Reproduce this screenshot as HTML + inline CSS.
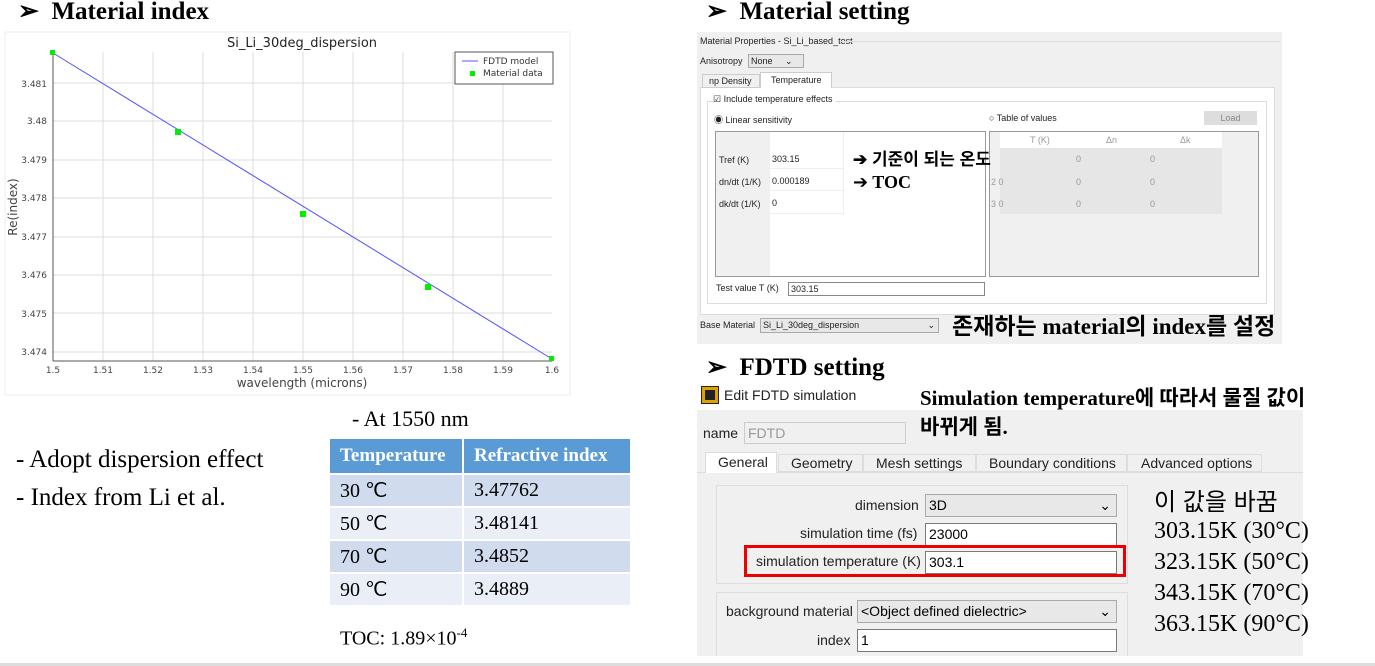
<!DOCTYPE html>
<html><head><meta charset="utf-8"><style>
*{margin:0;padding:0;box-sizing:border-box}
body{width:1375px;height:666px;position:relative;background:#fff;overflow:hidden;font-family:"Liberation Sans","Noto Sans CJK KR",sans-serif}
.a{position:absolute;white-space:nowrap}
.h{font-family:"Liberation Serif","Noto Serif CJK SC",serif;font-weight:bold;font-size:25px}
.s{font-family:"Liberation Serif","Noto Sans CJK KR",serif;font-size:25px}
.u{font-size:9px;color:#222}
.f{position:absolute;background:#fff;border:1px solid #aaa}
.t td{height:33px;padding-left:10px;font-family:"Liberation Serif",serif;font-size:20px;border:2px solid #fff}
.w{font-size:14px;color:#222}
.fi{position:absolute;background:#fff;border:1px solid #7a7a7a;font-size:14px;padding-left:3px;line-height:20px}
</style></head><body>
<div class="a h" style="left:18px;top:-4px">➢&nbsp; Material index</div>
<div class="a h" style="left:706px;top:-4px">➢&nbsp; Material setting</div>
<div class="a h" style="left:706px;top:352px">➢&nbsp; FDTD setting</div>

<svg class="a" style="left:0;top:0" width="580" height="400" font-family="DejaVu Sans,sans-serif">
<rect x="5" y="32" width="565" height="363" fill="#fff" stroke="#eee"/>
<g stroke="#ddd" stroke-width="1">
<line x1="103" y1="52" x2="103" y2="361"/><line x1="153" y1="52" x2="153" y2="361"/><line x1="203" y1="52" x2="203" y2="361"/><line x1="253" y1="52" x2="253" y2="361"/><line x1="303" y1="52" x2="303" y2="361"/><line x1="353" y1="52" x2="353" y2="361"/><line x1="403" y1="52" x2="403" y2="361"/><line x1="453" y1="52" x2="453" y2="361"/><line x1="503" y1="52" x2="503" y2="361"/>
<line x1="53" y1="83" x2="552" y2="83"/><line x1="53" y1="121" x2="552" y2="121"/><line x1="53" y1="160" x2="552" y2="160"/><line x1="53" y1="198" x2="552" y2="198"/><line x1="53" y1="237" x2="552" y2="237"/><line x1="53" y1="275" x2="552" y2="275"/><line x1="53" y1="313" x2="552" y2="313"/><line x1="53" y1="352" x2="552" y2="352"/>
</g>
<line x1="53" y1="52" x2="53" y2="361" stroke="#555"/><line x1="53" y1="361" x2="552" y2="361" stroke="#555"/>
<line x1="53" y1="53" x2="552" y2="359" stroke="#55f"/>
<g fill="#0e0"><rect x="50" y="50" width="5" height="5"/><rect x="175" y="129" width="6" height="6"/><rect x="300" y="211" width="6" height="6"/><rect x="425" y="284" width="6" height="6"/><rect x="549" y="356" width="5" height="5"/></g>
<text x="302" y="47" font-size="13" text-anchor="middle" fill="#222">Si_Li_30deg_dispersion</text>
<rect x="455" y="52" width="98" height="32" fill="#fff" stroke="#555"/>
<line x1="462" y1="61" x2="478" y2="61" stroke="#55f"/><text x="483" y="64" font-size="9" fill="#333">FDTD model</text>
<rect x="470" y="71" width="5" height="5" fill="#0e0"/><text x="483" y="76" font-size="9" fill="#333">Material data</text>
<g font-size="9" fill="#444" text-anchor="end"><text x="47" y="87">3.481</text><text x="47" y="124">3.48</text><text x="47" y="163">3.479</text><text x="47" y="201">3.478</text><text x="47" y="240">3.477</text><text x="47" y="278">3.476</text><text x="47" y="317">3.475</text><text x="47" y="355">3.474</text></g>
<g font-size="9" fill="#444" text-anchor="middle"><text x="53" y="373">1.5</text><text x="103" y="373">1.51</text><text x="153" y="373">1.52</text><text x="203" y="373">1.53</text><text x="253" y="373">1.54</text><text x="303" y="373">1.55</text><text x="353" y="373">1.56</text><text x="403" y="373">1.57</text><text x="453" y="373">1.58</text><text x="503" y="373">1.59</text><text x="552" y="373">1.6</text></g>
<text x="302" y="387" font-size="12" text-anchor="middle" fill="#444">wavelength (microns)</text>
<text transform="translate(17,207) rotate(-90)" font-size="12" text-anchor="middle" fill="#444">Re(index)</text>
</svg>

<div class="a s" style="left:352px;top:406px;font-size:22px">- At 1550 nm</div>
<div class="a s" style="left:16px;top:446px">- Adopt dispersion effect</div>
<div class="a s" style="left:16px;top:484px">- Index from Li et al.</div>
<table class="a t" style="left:328px;top:437px;width:304px;border-collapse:collapse">
<tr style="background:#5b9bd5;color:#fff"><td style="width:134px;font-weight:bold;height:36px;font-size:19px">Temperature</td><td style="font-weight:bold;font-size:19px">Refractive index</td></tr>
<tr style="background:#d0dbee"><td>30 ℃</td><td>3.47762</td></tr>
<tr style="background:#e9eef7"><td>50 ℃</td><td>3.48141</td></tr>
<tr style="background:#d0dbee"><td>70 ℃</td><td>3.4852</td></tr>
<tr style="background:#e9eef7"><td>90 ℃</td><td>3.4889</td></tr>
</table>
<div class="a" style="left:340px;top:625px;font-family:'Liberation Serif',serif;font-size:20px">TOC: 1.89×10<sup style="font-size:13px">-4</sup></div>

<!-- Material setting -->
<div class="a" style="left:697px;top:32px;width:585px;height:312px;background:#f0f0f0"></div>
<div class="a u" style="left:700px;top:36px">Material Properties - Si_Li_based_test</div>
<div class="a" style="left:840px;top:41px;width:440px;height:1px;background:#ddd"></div>
<div class="a u" style="left:700px;top:56px">Anisotropy</div>
<div class="f u" style="left:748px;top:54px;width:56px;height:14px;background:#e8e8e8;padding-left:2px;line-height:12px">None &nbsp; &nbsp; ⌄</div>
<div class="a" style="left:700px;top:87px;width:575px;height:228px;background:#fff;border:1px solid #ddd"></div>
<div class="a u" style="left:702px;top:74px;width:58px;height:14px;border:1px solid #ccc;background:#f0f0f0;padding-left:6px;line-height:12px">np Density</div>
<div class="a u" style="left:760px;top:72px;width:72px;height:16px;border:1px solid #ccc;border-bottom:none;background:#fff;padding-left:10px;line-height:14px">Temperature</div>
<div class="a" style="left:707px;top:101px;width:560px;height:203px;border:1px solid #ddd"></div>
<div class="a u" style="left:713px;top:94px;background:#fff;padding-right:3px">☑ Include temperature effects</div>
<div class="a u" style="left:714px;top:113px">◉ Linear sensitivity</div>
<div class="a u" style="left:989px;top:113px">○ Table of values</div>
<div class="a u" style="left:1204px;top:111px;width:53px;height:14px;background:#ddd;color:#888;text-align:center;line-height:14px">Load</div>
<div class="a" style="left:715px;top:131px;width:271px;height:146px;border:1px solid #999;background:#fff"></div>
<div class="a" style="left:716px;top:132px;width:54px;height:144px;background:#f0f0f0"></div>
<div class="a u" style="left:719px;top:155px">Tref (K)</div><div class="a u" style="left:772px;top:154px">303.15</div>
<div class="a u" style="left:719px;top:177px">dn/dt (1/K)</div><div class="a u" style="left:772px;top:176px">0.000189</div>
<div class="a u" style="left:719px;top:199px">dk/dt (1/K)</div><div class="a u" style="left:772px;top:198px">0</div>
<div class="a" style="left:770px;top:168px;width:74px;height:1px;background:#eee"></div>
<div class="a" style="left:770px;top:190px;width:74px;height:1px;background:#eee"></div>
<div class="a" style="left:770px;top:213px;width:74px;height:1px;background:#eee"></div>
<div class="a" style="left:843px;top:132px;width:1px;height:82px;background:#eee"></div>
<div class="a" style="left:989px;top:131px;width:270px;height:146px;border:1px solid #999;background:#f0f0f0"></div>
<div class="a" style="left:1000px;top:132px;width:222px;height:16px;background:#fff"></div>
<div class="a" style="left:1000px;top:148px;width:222px;height:66px;background:#e6e6e6"></div>
<div class="a u" style="left:1030px;top:135px;color:#999">T (K)</div><div class="a u" style="left:1106px;top:135px;color:#999">Δn</div><div class="a u" style="left:1180px;top:135px;color:#999">Δk</div>
<div class="a u" style="left:1076px;top:154px;color:#999">0</div><div class="a u" style="left:1150px;top:154px;color:#999">0</div>
<div class="a u" style="left:991px;top:177px;color:#999">2 0</div><div class="a u" style="left:1076px;top:177px;color:#999">0</div><div class="a u" style="left:1150px;top:177px;color:#999">0</div>
<div class="a u" style="left:991px;top:199px;color:#999">3 0</div><div class="a u" style="left:1076px;top:199px;color:#999">0</div><div class="a u" style="left:1150px;top:199px;color:#999">0</div>
<div class="a" style="left:853px;top:145px;font-size:17px;font-weight:bold">➔ 기준이 되는 온도</div>
<div class="a" style="left:853px;top:172px;font-size:18px;font-weight:bold;font-family:'Liberation Serif','DejaVu Sans',serif">➔ TOC</div>
<div class="a u" style="left:716px;top:283px">Test value T (K)</div>
<div class="f u" style="left:788px;top:282px;width:197px;height:14px;line-height:12px;padding-left:2px;border-color:#888">303.15</div>
<div class="a u" style="left:700px;top:320px">Base Material</div>
<div class="f u" style="left:760px;top:318px;width:179px;height:15px;background:#e8e8e8;line-height:13px;padding-left:2px">Si_Li_30deg_dispersion<span style="float:right;padding-right:3px">⌄</span></div>
<div class="a" style="left:952px;top:307px;font-size:23px;font-weight:bold;font-family:'Liberation Serif','Noto Sans CJK KR',serif">존재하는 material의 index를 설정</div>

<!-- FDTD -->
<div class="a" style="left:697px;top:410px;width:606px;height:246px;background:#f0f0f0"></div>
<div class="a" style="left:702px;top:387px;width:16px;height:16px;background:#222;border:3px solid #e0a000;outline:1px solid #222"></div>
<div class="a w" style="left:724px;top:387px">Edit FDTD simulation</div>
<div class="a" style="left:920px;top:384px;font-size:21px;font-weight:bold;font-family:'Liberation Serif','Noto Sans CJK KR',serif;line-height:29px">Simulation temperature에 따라서 물질 값이<br>바뀌게 됨.</div>
<div class="a w" style="left:703px;top:425px">name</div>
<div class="f w" style="left:744px;top:422px;width:162px;height:22px;background:#f0f0f0;color:#999;padding-left:3px;line-height:20px;border-color:#ccc">FDTD</div>
<div class="a" style="left:697px;top:472px;width:606px;height:1px;background:#ddd"></div>
<div class="a w" style="left:705px;top:452px;width:72px;height:21px;background:#fff;border:1px solid #ddd;border-bottom:none;padding-left:12px;line-height:19px">General</div>
<div class="a w" style="left:778px;top:454px;width:85px;height:18px;border:1px solid #ddd;padding-left:12px;line-height:16px">Geometry</div>
<div class="a w" style="left:863px;top:454px;width:113px;height:18px;border:1px solid #ddd;padding-left:12px;line-height:16px">Mesh settings</div>
<div class="a w" style="left:976px;top:454px;width:151px;height:18px;border:1px solid #ddd;padding-left:12px;line-height:16px">Boundary conditions</div>
<div class="a w" style="left:1127px;top:454px;width:135px;height:18px;border:1px solid #ddd;padding-left:13px;line-height:16px">Advanced options</div>
<div class="a" style="left:716px;top:485px;width:412px;height:99px;border:1px solid #ddd"></div>
<div class="a w" style="left:855px;top:497px">dimension</div>
<div class="fi" style="left:925px;top:494px;width:192px;height:23px;background:#e8e8e8;border-color:#aaa">3D<span style="float:right;padding-right:5px">⌄</span></div>
<div class="a w" style="left:800px;top:525px">simulation time (fs)</div>
<div class="fi" style="left:925px;top:523px;width:192px;height:23px">23000</div>
<div class="a" style="left:744px;top:545px;width:382px;height:32px;border:3px solid #e00"></div>
<div class="a w" style="left:756px;top:553px">simulation temperature (K)</div>
<div class="fi" style="left:925px;top:551px;width:192px;height:23px">303.1</div>
<div class="a" style="left:716px;top:592px;width:412px;height:64px;border:1px solid #ddd;border-bottom:none"></div>
<div class="a w" style="left:726px;top:603px">background material</div>
<div class="fi" style="left:857px;top:600px;width:260px;height:23px;background:#e8e8e8;border-color:#aaa">&lt;Object defined dielectric&gt;<span style="float:right;padding-right:5px">⌄</span></div>
<div class="a w" style="left:817px;top:632px">index</div>
<div class="fi" style="left:857px;top:629px;width:260px;height:23px">1</div>
<div class="a" style="left:1154px;top:482px;font-size:24px">이 값을 바꿈</div>
<div class="a" style="left:1154px;top:516px;font-family:'Liberation Serif',serif;font-size:24px;line-height:31px">303.15K (30°C)<br>323.15K (50°C)<br>343.15K (70°C)<br>363.15K (90°C)</div>
<div class="a" style="left:0;top:663px;width:1375px;height:3px;background:#ddd"></div>
</body></html>
